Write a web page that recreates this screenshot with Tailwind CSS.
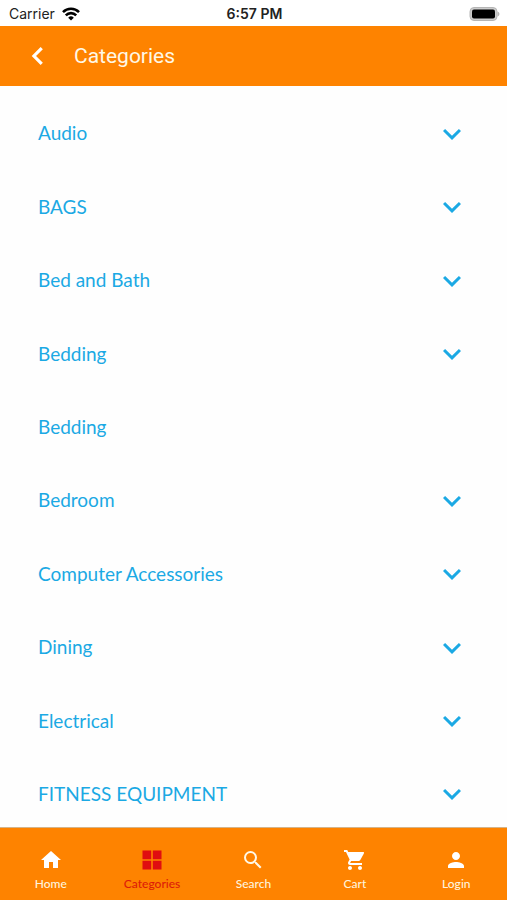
<!DOCTYPE html>
<html lang="en">
<head>
<meta charset="utf-8">
<meta name="viewport" content="width=device-width, initial-scale=1">
<title>Categories</title>
<script src="https://cdn.jsdelivr.net/npm/@tailwindcss/browser@4"></script>
</head>
<body class="bg-white">
<svg class="hidden" aria-hidden="true">
  <symbol id="chevron" viewBox="0 0 24 24"><path d="M7.41 8.59 12 13.17l4.59-4.58L18 10l-6 6-6-6z"/></symbol>
</svg>
<div class="flex h-screen flex-col font-['Lato',sans-serif]">
  <div class="grid h-[26px] shrink-0 grid-cols-3 items-center pr-[7px] pl-[9px] pt-1 pb-1 font-['Inter',sans-serif] text-sm text-[#222]">
    <div class="flex items-center gap-[7px]">
      <span>Carrier</span>
      <svg class="h-[14px] w-[18px]" viewBox="0 0 18 14" fill="none" stroke="#000" stroke-width="2.6" role="img" aria-label="Wi-Fi"><path d="M1 5.100a11.3 11.3 0 0 1 16 0M3.800 8.300a7.400 7.400 0 0 1 10.400 0"/><path d="M9 13.600 6.200 10.700a4 4 0 0 1 5.600 0z" fill="#000" stroke="none"/></svg>
    </div>
    <span class="text-center font-semibold">6:57 PM</span>
    <svg class="h-[14px] w-[32px] justify-self-end" viewBox="0 0 32 14" role="img" aria-label="Battery full"><rect x="2" y="0.5" width="27" height="13" rx="4" fill="#ccc" stroke="#b5b5b5"/><rect x="4" y="2.500" width="23" height="9" rx="2" fill="#000"/><path d="M29.500 4.500c2.600.9 2.600 4.100 0 5z" fill="#b5b5b5"/></svg>
  </div>
  <header class="flex h-[60px] shrink-0 items-center bg-[#fe8300] pl-6 text-[#fff8e6]">
    <button type="button" aria-label="Back" class="flex">
      <svg class="size-7" viewBox="0 0 24 24" fill="none" stroke="#fff" stroke-width="2.700"><path d="m15.200 5.200-6.700 6.800 6.700 6.800"/></svg>
    </button>
    <h1 class="pt-[2px] pl-[22px] font-['Roboto',sans-serif] text-[21px]">Categories</h1>
  </header>
  <main class="flex min-h-0 flex-1 flex-col overflow-y-auto bg-[#fefefe] px-[38px] pt-[11px] [scrollbar-width:none]">
    <ul class="-mb-1 flex flex-1 flex-col text-[19px] text-[#1ba9e4]">
      <li class="flex min-h-[72px] flex-1"><button type="button" class="flex flex-1 items-center justify-between text-left">Audio<svg class="-mr-px size-9 fill-current" aria-hidden="true"><use href="#chevron"/></svg></button></li>
      <li class="flex min-h-[72px] flex-1"><button type="button" class="flex flex-1 items-center justify-between text-left">BAGS<svg class="-mr-px size-9 fill-current" aria-hidden="true"><use href="#chevron"/></svg></button></li>
      <li class="flex min-h-[72px] flex-1"><button type="button" class="flex flex-1 items-center justify-between text-left">Bed and Bath<svg class="-mr-px size-9 fill-current" aria-hidden="true"><use href="#chevron"/></svg></button></li>
      <li class="flex min-h-[72px] flex-1"><button type="button" class="flex flex-1 items-center justify-between text-left">Bedding<svg class="-mr-px size-9 fill-current" aria-hidden="true"><use href="#chevron"/></svg></button></li>
      <li class="flex min-h-[72px] flex-1"><button type="button" class="flex flex-1 items-center justify-between text-left">Bedding</button></li>
      <li class="flex min-h-[72px] flex-1"><button type="button" class="flex flex-1 items-center justify-between text-left">Bedroom<svg class="-mr-px size-9 fill-current" aria-hidden="true"><use href="#chevron"/></svg></button></li>
      <li class="flex min-h-[72px] flex-1"><button type="button" class="flex flex-1 items-center justify-between text-left">Computer Accessories<svg class="-mr-px size-9 fill-current" aria-hidden="true"><use href="#chevron"/></svg></button></li>
      <li class="flex min-h-[72px] flex-1"><button type="button" class="flex flex-1 items-center justify-between text-left">Dining<svg class="-mr-px size-9 fill-current" aria-hidden="true"><use href="#chevron"/></svg></button></li>
      <li class="flex min-h-[72px] flex-1"><button type="button" class="flex flex-1 items-center justify-between text-left">Electrical<svg class="-mr-px size-9 fill-current" aria-hidden="true"><use href="#chevron"/></svg></button></li>
      <li class="flex min-h-[72px] flex-1"><button type="button" class="flex flex-1 items-center justify-between text-left">FITNESS EQUIPMENT<svg class="-mr-px size-9 fill-current" aria-hidden="true"><use href="#chevron"/></svg></button></li>
    </ul>
  </main>
  <nav aria-label="Main" class="grid h-[73px] shrink-0 grid-cols-5 border-t border-[#d3b48c] bg-[#fe8300] pt-5 text-xs font-medium text-[#fff3dc]">
    <a href="#home" class="flex flex-col items-center gap-1"><svg class="size-6 fill-white" viewBox="0 0 24 24" aria-hidden="true"><path d="M10 20v-6h4v6h5v-8h3L12 3 2 12h3v8z"/></svg>Home</a>
    <a href="#categories" aria-current="page" class="flex flex-col items-center gap-1 text-[#dd1c08]"><svg class="size-6 fill-[#e00d10]" viewBox="0 0 24 24" aria-hidden="true"><path d="M2.500 2.500h8.700v8.700H2.500zM12.800 2.500h8.700v8.700h-8.700zM2.500 12.800h8.700v8.700H2.500zM12.800 12.800h8.700v8.700h-8.700z"/></svg>Categories</a>
    <a href="#search" class="flex flex-col items-center gap-1"><svg class="size-6 fill-[#fff8e6]" viewBox="0 0 24 24" aria-hidden="true"><path d="M15.500 14h-.79l-.28-.27A6.471 6.471 0 0 0 16 9.500 6.500 6.500 0 1 0 9.500 16c1.610 0 3.090-.59 4.230-1.570l.27.28v.79l5 4.990L20.490 19l-4.990-5zm-6 0C7.010 14 5 11.990 5 9.500S7.010 5 9.500 5 14 7.010 14 9.500 11.990 14 9.500 14z"/></svg>Search</a>
    <a href="#cart" class="flex flex-col items-center gap-1"><svg class="size-6 fill-white" viewBox="0 0 24 24" aria-hidden="true"><path d="M7 18c-1.100 0-1.990.9-1.990 2S5.900 22 7 22s2-.9 2-2-.9-2-2-2zM1 2v2h2l3.600 7.590-1.350 2.450c-.16.28-.25.61-.25.960 0 1.100.9 2 2 2h12v-2H7.420c-.14 0-.25-.11-.25-.25l.03-.12.9-1.630h7.450c.75 0 1.410-.41 1.750-1.030l3.580-6.490A1 1 0 0 0 20 4H5.210l-.94-2H1zm16 16c-1.100 0-1.990.9-1.990 2s.89 2 1.990 2 2-.9 2-2-.9-2-2-2z"/></svg>Cart</a>
    <a href="#login" class="flex flex-col items-center gap-1"><svg class="size-6 fill-white" viewBox="0 0 24 24" aria-hidden="true"><path d="M12 12c2.210 0 4-1.790 4-4s-1.790-4-4-4-4 1.790-4 4 1.790 4 4 4zm0 2c-2.670 0-8 1.340-8 4v2h16v-2c0-2.660-5.330-4-8-4z"/></svg>Login</a>
  </nav>
</div>
</body>
</html>
